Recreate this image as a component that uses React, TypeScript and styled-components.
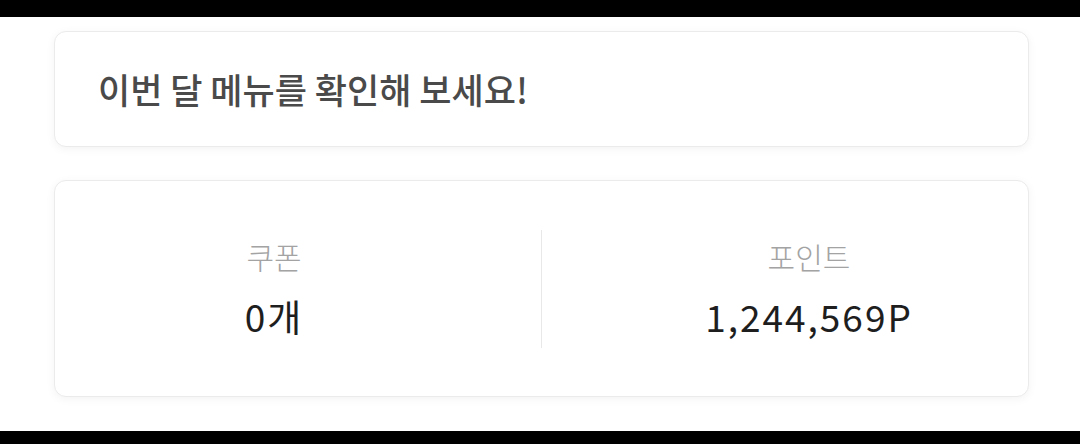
import React from "react";
import styled, { createGlobalStyle } from "styled-components";

const GlobalStyle = createGlobalStyle`
  html, body {
    margin: 0;
    padding: 0;
    background: #ffffff;
  }
  body {
    font-family: "Noto Sans CJK KR", "Noto Sans", sans-serif;
  }
`;

const stats = [
  { label: "쿠폰", value: "0개" },
  { label: "포인트", value: "1,244,569P" },
];

const App = () => {
  return (
    <Page>
      <GlobalStyle />
      <Bar $height={17} />
      <Content>
        <Card className="notice">
          <Title>이번 달 메뉴를 확인해 보세요!</Title>
        </Card>
        <Card className="stats">
          <Stat>
            <Label>{stats[0].label}</Label>
            <Value>{stats[0].value}</Value>
          </Stat>
          <Divider />
          <Stat>
            <Label>{stats[1].label}</Label>
            <Value>{stats[1].value}</Value>
          </Stat>
        </Card>
      </Content>
      <Bar $height={13} />
    </Page>
  );
};

const Page = styled.div`
  width: 1080px;
  height: 444px;
  display: flex;
  flex-direction: column;
  overflow: hidden;
`;

const Bar = styled.div<{ $height: number }>`
  flex: 0 0 ${(p) => p.$height}px;
  background: #000;
`;

const Content = styled.div`
  flex: 1;
  display: flex;
  flex-direction: column;
  gap: 33px;
  padding: 14px 51px 0 54px;
`;

const Card = styled.div`
  box-sizing: border-box;
  background: #fff;
  border: 1px solid #ebebeb;
  border-radius: 12px;
  box-shadow: 0 2px 10px rgba(0, 0, 0, 0.05);
  &.notice {
    height: 116px;
    display: flex;
    align-items: center;
    padding: 0 43px;
  }
  &.stats {
    height: 217px;
    display: grid;
    grid-template-columns: 1fr 1px 1fr;
    column-gap: 88px;
    align-items: center;
    padding: 0 40px;
  }
`;

const Title = styled.div`
  font-size: 35px;
  font-weight: 500;
  color: #4a4a4a;
  line-height: 1;
  margin-top: -2px;
`;

const Stat = styled.div`
  display: flex;
  flex-direction: column;
  align-items: center;
  gap: 20px;
`;

const Label = styled.div`
  font-size: 30px;
  font-weight: 300;
  color: #a3a3a3;
  line-height: 1.2;
`;

const Value = styled.div`
  font-size: 37px;
  color: #1e1e1e;
  letter-spacing: 2px;
  line-height: 1.2;
`;

const Divider = styled.div`
  width: 1px;
  height: 118px;
  background: #e8e8e8;
`;

export default App;
